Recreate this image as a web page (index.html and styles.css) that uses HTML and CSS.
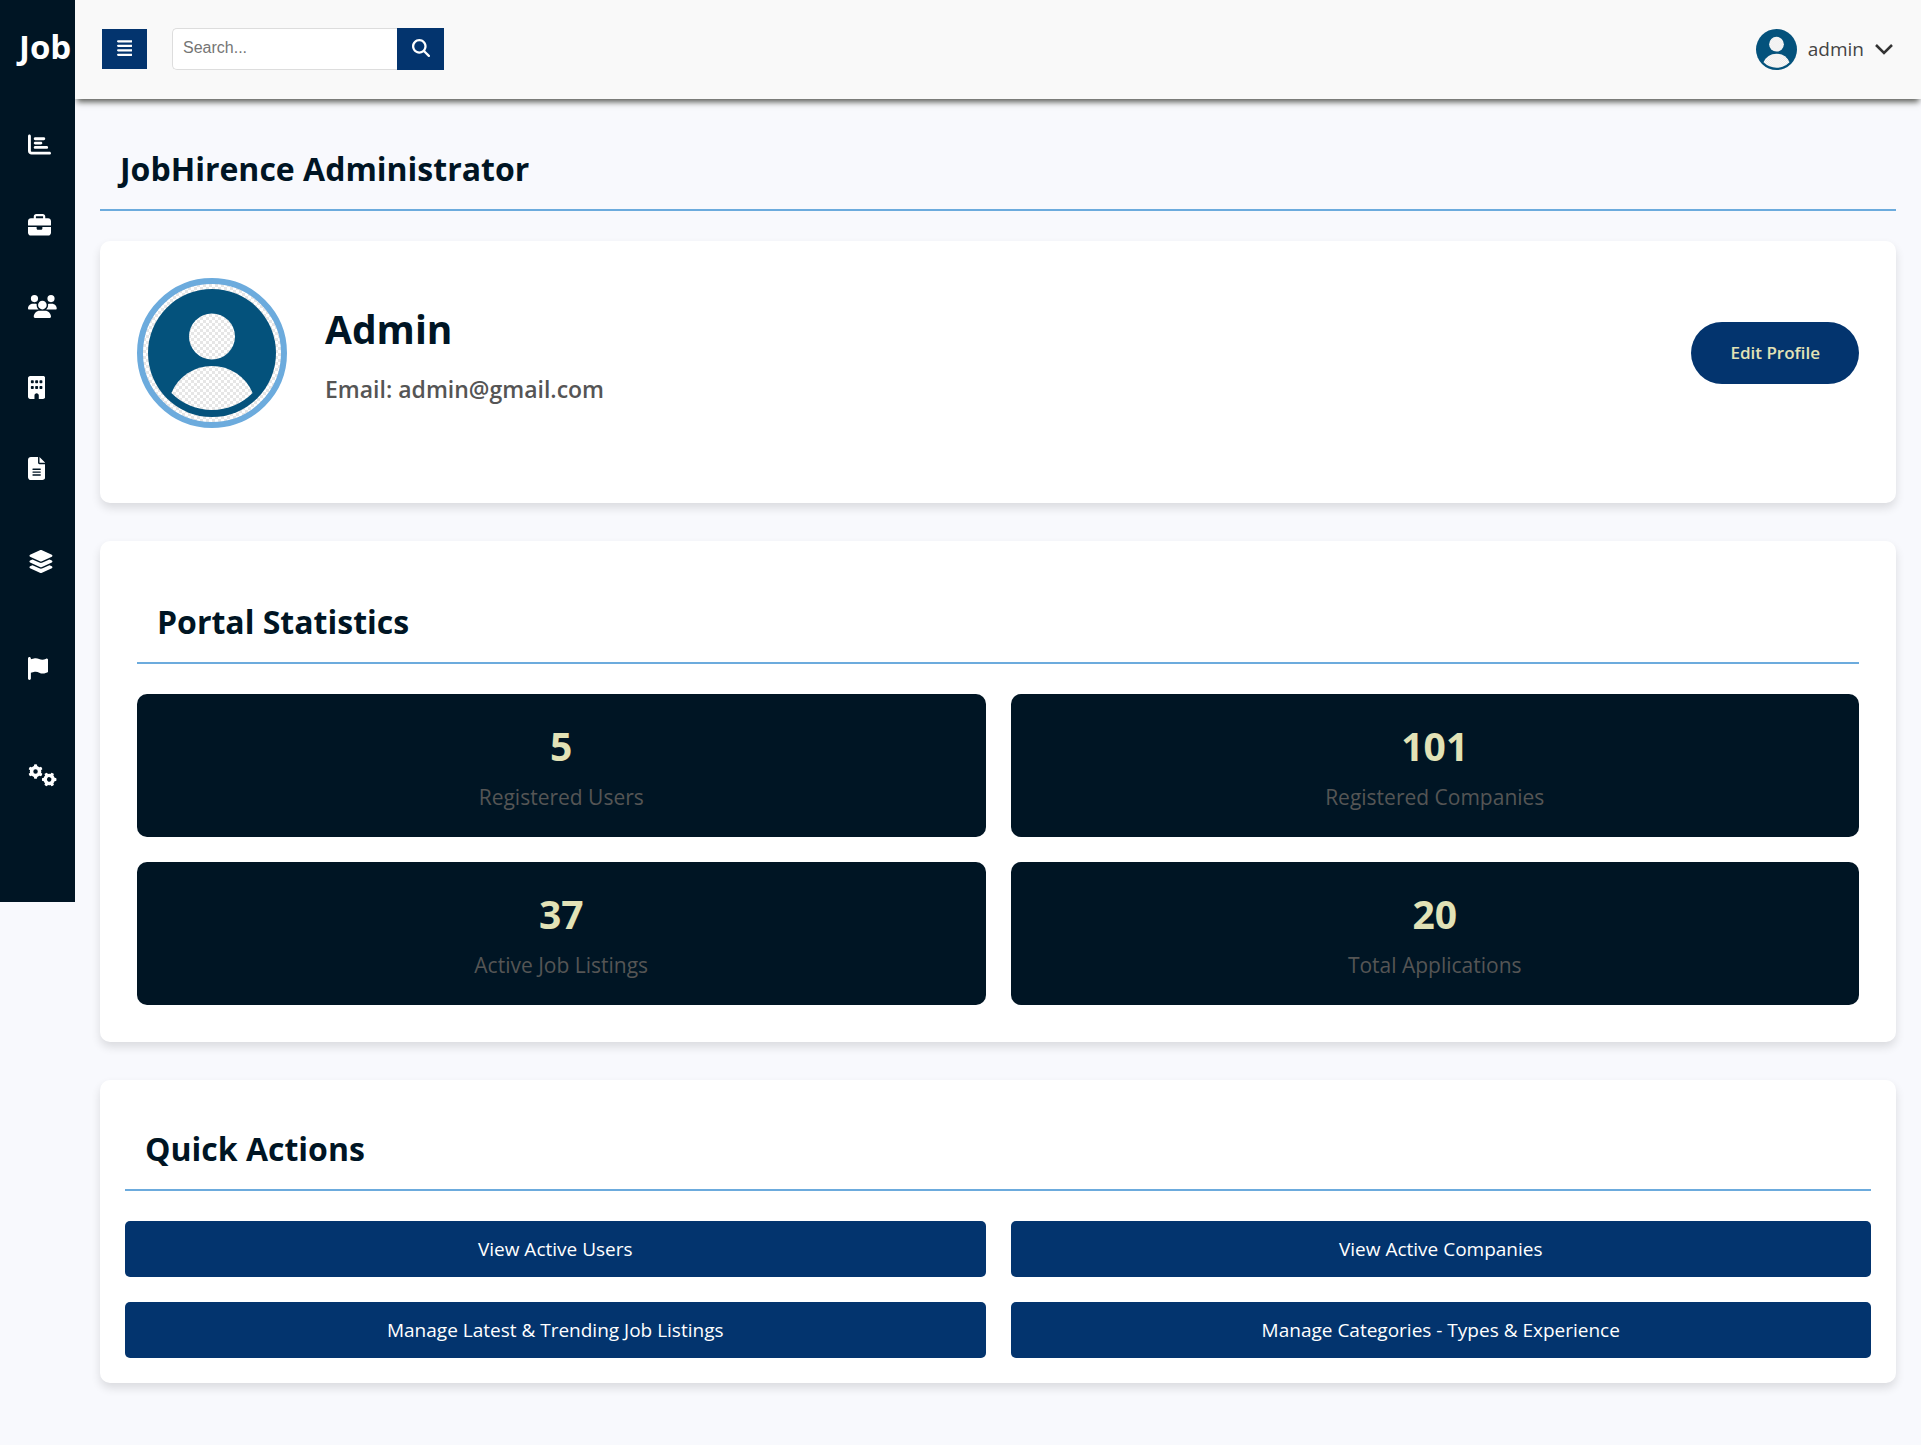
FILE: index.html
```html
<!DOCTYPE html>
<html lang="en">
<head>
  <meta charset="utf-8">
  <meta name="viewport" content="width=device-width, initial-scale=1">
  <title>JobHirence Administrator</title>
  <link rel="stylesheet" href="styles.css">
</head>
<body>
  <svg class="defs" aria-hidden="true">
    <defs>
      <pattern id="checker" width="6" height="6" patternUnits="userSpaceOnUse">
        <rect width="6" height="6" fill="#fff"/>
        <path d="M0 0h3v3h-3zM3 3h3v3h-3z" fill="#e6e6e6"/>
      </pattern>
      <symbol id="person" viewBox="5 5 128 128" overflow="visible">
        <circle cx="69" cy="69" r="64" fill="#04527c"/>
        <circle cx="69" cy="52.5" r="23" fill="url(#checker)"/>
        <path d="M28.4 109A44 44 0 0 1 109.6 109A57 57 0 0 1 28.4 109Z" fill="url(#checker)"/>
      </symbol>
      <g id="tooth"><path d="M-40 -90L-32 -156Q0 -168 32 -156L40 -90Z"/></g>
      <g id="gear">
        <circle r="89" fill="none" stroke="currentColor" stroke-width="78"/>
        <use href="#tooth"/><use href="#tooth" transform="rotate(60)"/><use href="#tooth" transform="rotate(120)"/>
        <use href="#tooth" transform="rotate(180)"/><use href="#tooth" transform="rotate(240)"/><use href="#tooth" transform="rotate(300)"/>
      </g>
    </defs>
  </svg>

  <div class="layout">
    <aside class="sidebar">
      <a class="logo" href="#">Job</a>
      <nav aria-label="Main">
        <ul class="nav">
          <li><a href="#" aria-label="Dashboard"><svg class="icon" viewBox="0 0 512 512"><path d="M32 32c17.7 0 32 14.3 32 32V400c0 8.8 7.2 16 16 16H480c17.7 0 32 14.3 32 32s-14.3 32-32 32H80c-44.2 0-80-35.8-80-80V64C0 46.3 14.3 32 32 32zm96 96c0-17.7 14.3-32 32-32l192 0c17.7 0 32 14.3 32 32s-14.3 32-32 32l-192 0c-17.7 0-32-14.3-32-32zm32 64H288c17.7 0 32 14.3 32 32s-14.3 32-32 32H160c-17.7 0-32-14.3-32-32s14.3-32 32-32zm0 96H416c17.7 0 32 14.3 32 32s-14.3 32-32 32H160c-17.7 0-32-14.3-32-32s14.3-32 32-32z"/></svg></a></li>
          <li><a href="#" aria-label="Jobs"><svg class="icon" viewBox="0 0 512 512"><path d="M184 48H328c4.4 0 8 3.6 8 8V96H176V56c0-4.4 3.6-8 8-8zm-56 8V96H64C28.7 96 0 124.7 0 160v96H192 320 512V160c0-35.3-28.7-64-64-64H384V56c0-30.9-25.1-56-56-56H184c-30.9 0-56 25.1-56 56zM512 288H320v32c0 17.7-14.3 32-32 32H224c-17.7 0-32-14.3-32-32V288H0V416c0 35.3 28.7 64 64 64H448c35.3 0 64-28.7 64-64V288z"/></svg></a></li>
          <li><a href="#" aria-label="Users"><svg class="icon" viewBox="0 0 640 512"><path d="M144 0a80 80 0 1 1 0 160A80 80 0 1 1 144 0zM512 0a80 80 0 1 1 0 160A80 80 0 1 1 512 0zM0 298.7C0 239.8 47.8 192 106.7 192h42.7c15.9 0 31 3.5 44.6 9.7c-1.3 7.2-1.9 14.7-1.9 22.3c0 38.2 16.8 72.5 43.3 96c-.2 0-.4 0-.7 0H21.3C9.6 320 0 310.4 0 298.7zM405.3 320c-.2 0-.4 0-.7 0c26.6-23.5 43.3-57.8 43.3-96c0-7.6-.7-15-1.9-22.3c13.6-6.3 28.7-9.7 44.6-9.7h42.7C592.2 192 640 239.8 640 298.7c0 11.8-9.6 21.3-21.3 21.3H405.3zM224 224a96 96 0 1 1 192 0 96 96 0 1 1 -192 0zM128 485.3C128 411.7 187.7 352 261.3 352H378.7C452.3 352 512 411.7 512 485.3c0 14.7-11.9 26.7-26.7 26.7H154.7c-14.7 0-26.7-11.9-26.7-26.7z"/></svg></a></li>
          <li><a href="#" aria-label="Companies"><svg class="icon" viewBox="0 0 384 512"><path fill-rule="evenodd" d="M48 0C21.5 0 0 21.5 0 48V464c0 26.5 21.5 48 48 48h96V432c0-26.5 21.5-48 48-48s48 21.5 48 48v80h96c26.5 0 48-21.5 48-48V48c0-26.5-21.5-48-48-48H48zM80 96h32q16 0 16 16v32q0 16-16 16H80q-16 0-16-16v-32q0-16 16-16zM176 96h32q16 0 16 16v32q0 16-16 16h-32q-16 0-16-16v-32q0-16 16-16zM272 96h32q16 0 16 16v32q0 16-16 16h-32q-16 0-16-16v-32q0-16 16-16zM80 224h32q16 0 16 16v32q0 16-16 16H80q-16 0-16-16v-32q0-16 16-16zM176 224h32q16 0 16 16v32q0 16-16 16h-32q-16 0-16-16v-32q0-16 16-16zM272 224h32q16 0 16 16v32q0 16-16 16h-32q-16 0-16-16v-32q0-16 16-16z"/></svg></a></li>
          <li><a href="#" aria-label="Applications"><svg class="icon" viewBox="0 0 384 512"><path d="M64 0C28.7 0 0 28.7 0 64V448c0 35.3 28.7 64 64 64H320c35.3 0 64-28.7 64-64V160H256c-17.7 0-32-14.3-32-32V0H64zM256 0V128H384L256 0zM112 256H272c8.8 0 16 7.2 16 16s-7.2 16-16 16H112c-8.8 0-16-7.2-16-16s7.2-16 16-16zm0 64H272c8.8 0 16 7.2 16 16s-7.2 16-16 16H112c-8.8 0-16-7.2-16-16s7.2-16 16-16zm0 64H272c8.8 0 16 7.2 16 16s-7.2 16-16 16H112c-8.8 0-16-7.2-16-16s7.2-16 16-16z"/></svg></a></li>
        </ul>
        <ul class="nav nav-groups">
          <li><a href="#" aria-label="Categories"><svg class="icon" viewBox="0 0 576 512"><path d="M264.5 5.2c14.9-6.9 32.1-6.9 47 0l218.6 101c8.5 3.9 13.9 12.4 13.9 21.8s-5.4 17.9-13.9 21.8l-218.6 101c-14.9 6.9-32.1 6.9-47 0L45.9 149.8C37.4 145.8 32 137.3 32 128s5.4-17.9 13.9-21.8L264.5 5.2zM476.9 209.6l53.2 24.6c8.5 3.9 13.9 12.4 13.9 21.8s-5.4 17.9-13.9 21.8l-218.6 101c-14.9 6.9-32.1 6.9-47 0L45.9 277.8C37.4 273.8 32 265.3 32 256s5.4-17.9 13.9-21.8l53.2-24.6 152 70.2c23.4 10.8 50.4 10.8 73.8 0l152-70.2zm-152 198.2l152-70.2 53.2 24.6c8.5 3.9 13.9 12.4 13.9 21.8s-5.4 17.9-13.9 21.8l-218.6 101c-14.9 6.9-32.1 6.9-47 0L45.9 405.8C37.4 401.8 32 393.3 32 384s5.4-17.9 13.9-21.8l53.2-24.6 152 70.2c23.4 10.8 50.4 10.8 73.8 0z"/></svg></a></li>
          <li><a href="#" aria-label="Reports"><svg class="icon" viewBox="0 0 448 512"><path d="M64 32C64 14.3 49.7 0 32 0S0 14.3 0 32V64 368 480c0 17.7 14.3 32 32 32s32-14.3 32-32V352l64.3-16.1c41.1-10.3 84.6-5.5 122.5 13.4c44.2 22.1 95.5 24.8 141.7 7.4l34.7-13c12.5-4.7 20.8-16.6 20.8-30V66.1c0-23-24.2-38-44.8-27.7l-9.6 4.8c-46.3 23.2-100.8 23.2-147.1 0c-35.1-17.6-75.4-22-113.5-12.5L64 48V32z"/></svg></a></li>
          <li><a href="#" aria-label="Settings"><svg class="icon" viewBox="0 0 640 512"><use href="#gear" transform="translate(168 168)"/><use href="#gear" transform="translate(472 344) rotate(30)"/></svg></a></li>
        </ul>
      </nav>
    </aside>

    <div class="page">
      <header class="topbar">
        <button class="menu-button" type="button" aria-label="Toggle menu">
          <svg class="menu-icon" viewBox="0 0 448 512"><path d="M32 32H416a32 32 0 0 1 0 64H32a32 32 0 0 1 0-64zM32 160H416a32 32 0 0 1 0 64H32a32 32 0 0 1 0-64zM32 288H416a32 32 0 0 1 0 64H32a32 32 0 0 1 0-64zM32 416H416a32 32 0 0 1 0 64H32a32 32 0 0 1 0-64z"/></svg>
        </button>
        <form class="search" role="search">
          <input class="search-input" type="text" placeholder="Search..." aria-label="Search">
          <button class="search-button" type="button" aria-label="Submit search">
            <svg class="search-icon" viewBox="0 0 512 512"><path d="M416 208c0 45.9-14.9 88.3-40 122.7L502.6 457.4c12.5 12.5 12.5 32.8 0 45.3s-32.8 12.5-45.3 0L330.7 376c-34.4 25.2-76.8 40-122.7 40C93.1 416 0 322.9 0 208S93.1 0 208 0S416 93.1 416 208zM208 352a144 144 0 1 0 0-288 144 144 0 1 0 0 288z"/></svg>
          </button>
        </form>
        <button class="account" type="button">
          <svg class="account-photo" viewBox="0 0 128 128" aria-hidden="true"><use href="#person" width="128" height="128"/></svg>
          <span>admin</span>
          <svg class="chevron" viewBox="0 0 18 12" aria-hidden="true"><path d="M1 2l8 8 8-8"/></svg>
        </button>
      </header>

      <main class="content">
        <h1 class="heading">JobHirence Administrator</h1>

        <section class="card profile">
          <svg class="profile-photo" viewBox="0 0 150 150" role="img" aria-label="Admin photo">
            <circle cx="75" cy="75" r="72" fill="url(#checker)" stroke="#6cabdd" stroke-width="6"/>
            <use href="#person" x="11" y="11" width="128" height="128"/>
          </svg>
          <div class="profile-info">
            <h2 class="profile-name">Admin</h2>
            <p class="profile-email">Email: admin@gmail.com</p>
          </div>
          <button class="edit-button" type="button">Edit Profile</button>
        </section>

        <section class="card stats">
          <h2 class="heading">Portal Statistics</h2>
          <div class="grid">
            <div class="stat"><strong class="stat-value">5</strong><span class="stat-label">Registered Users</span></div>
            <div class="stat"><strong class="stat-value">101</strong><span class="stat-label">Registered Companies</span></div>
            <div class="stat"><strong class="stat-value">37</strong><span class="stat-label">Active Job Listings</span></div>
            <div class="stat"><strong class="stat-value">20</strong><span class="stat-label">Total Applications</span></div>
          </div>
        </section>

        <section class="card actions">
          <h2 class="heading">Quick Actions</h2>
          <div class="grid">
            <a class="action" href="#">View Active Users</a>
            <a class="action" href="#">View Active Companies</a>
            <a class="action" href="#">Manage Latest &amp; Trending Job Listings</a>
            <a class="action" href="#">Manage Categories - Types &amp; Experience</a>
          </div>
        </section>
      </main>
    </div>
  </div>
</body>
</html>
```
FILE: styles.css
```css
:root {
  --ink: #001524;
  --navy: #03346e;
  --sky: #6cabdd;
  --cream: #e2e2b6;
  --grey: #555;
}

* {
  box-sizing: border-box;
  margin: 0;
  padding: 0;
}

body {
  background: #f8f9fd;
  color: var(--ink);
  font-family: "Open Sans", "Noto Sans", sans-serif;
}

button {
  border: 0;
  font-family: inherit;
  cursor: pointer;
}

a {
  color: inherit;
  text-decoration: none;
}

.defs {
  display: block;
  width: 0;
  height: 0;
}

.layout {
  display: flex;
  align-items: flex-start;
}

/* Sidebar */
.sidebar {
  position: relative;
  z-index: 2;
  flex: none;
  width: 75px;
  padding-bottom: 75px;
  background: var(--ink);
  color: #fff;
}

.logo {
  display: block;
  height: 104px;
  padding: 24px 0 0 19px;
  font-size: 33px;
  font-weight: 700;
  line-height: 46px;
}

.nav {
  list-style: none;
}

.nav a {
  display: flex;
  align-items: center;
  height: 81px;
  padding-left: 28px;
}

.nav-groups {
  display: grid;
  gap: 3px;
}

.nav-groups a {
  height: 104px;
}

.icon {
  height: 23px;
  fill: currentColor;
}

/* Top bar */
.page {
  flex: 1;
  min-width: 0;
}

.topbar {
  display: flex;
  align-items: center;
  height: 99px;
  padding: 0 28px 1px 27px;
  background: #f9f9f9;
  box-shadow: 0 5px 6px -2px #5a5c57;
}

.menu-button {
  display: grid;
  place-items: center;
  width: 45px;
  height: 40px;
  padding-bottom: 2px;
  background: var(--navy);
}

.menu-icon {
  height: 18px;
  fill: #fff;
}

.search {
  display: flex;
  margin-left: 25px;
}

.search-input {
  width: 225px;
  height: 42px;
  padding: 0 10px 2px;
  border: 1px solid #ddd;
  border-right: 0;
  border-radius: 5px 0 0 5px;
  background: #fff;
  font: 16px "Liberation Sans", Arial, sans-serif;
}

.search-input::placeholder {
  color: #757575;
}

.search-button {
  display: grid;
  place-items: center;
  width: 47px;
  height: 42px;
  padding-bottom: 2px;
  background: var(--navy);
}

.search-icon {
  height: 18px;
  fill: #fff;
}

.account {
  display: flex;
  align-items: center;
  gap: 11px;
  margin-left: auto;
  background: none;
  color: #444;
  font-size: 19px;
}

.account-photo {
  width: 41px;
  height: 41px;
}

.chevron {
  width: 18px;
  height: 12px;
  fill: none;
  stroke: #333;
  stroke-width: 2.5;
}

/* Content */
.content {
  padding: 26px 25px 62px;
}

.heading {
  margin-bottom: 30px;
  padding: 20px 20px 16px;
  border-bottom: 2px solid var(--sky);
  font-size: 32px;
  font-weight: 700;
  line-height: 48px;
}

.card {
  border-radius: 10px;
  background: #fff;
  box-shadow: 0 5px 10px rgba(0, 0, 0, 0.12);
}

.card + .card {
  margin-top: 38px;
}

.profile {
  display: flex;
  align-items: center;
  gap: 38px;
  padding: 37px 37px 75px;
}

.profile-photo {
  flex: none;
  width: 150px;
  height: 150px;
}

.profile-name {
  font-size: 39px;
  font-weight: 700;
  line-height: 56px;
}

.profile-email {
  margin-top: 16px;
  color: var(--grey);
  font-size: 23px;
  font-weight: 600;
  line-height: 32px;
}

.edit-button {
  height: 62px;
  margin-left: auto;
  padding: 0 39px 2px;
  border-radius: 31px;
  background: var(--navy);
  color: var(--cream);
  font-size: 17px;
  font-weight: 600;
}

.stats {
  padding: 37px;
}

.actions {
  padding: 25px;
}

.grid {
  display: grid;
  grid-template-columns: 1fr 1fr;
  gap: 25px;
}

.stat {
  display: flex;
  flex-direction: column;
  align-items: center;
  padding: 24px;
  border-radius: 10px;
  background: var(--ink);
}

.stat-value {
  color: var(--cream);
  font-size: 39px;
  font-weight: 700;
  line-height: 56px;
}

.stat-label {
  margin-top: 7px;
  color: var(--grey);
  font-size: 21px;
  line-height: 32px;
}

.action {
  height: 56px;
  border-radius: 5px;
  background: var(--navy);
  color: #fff;
  font-size: 19px;
  line-height: 56px;
  text-align: center;
}
```
